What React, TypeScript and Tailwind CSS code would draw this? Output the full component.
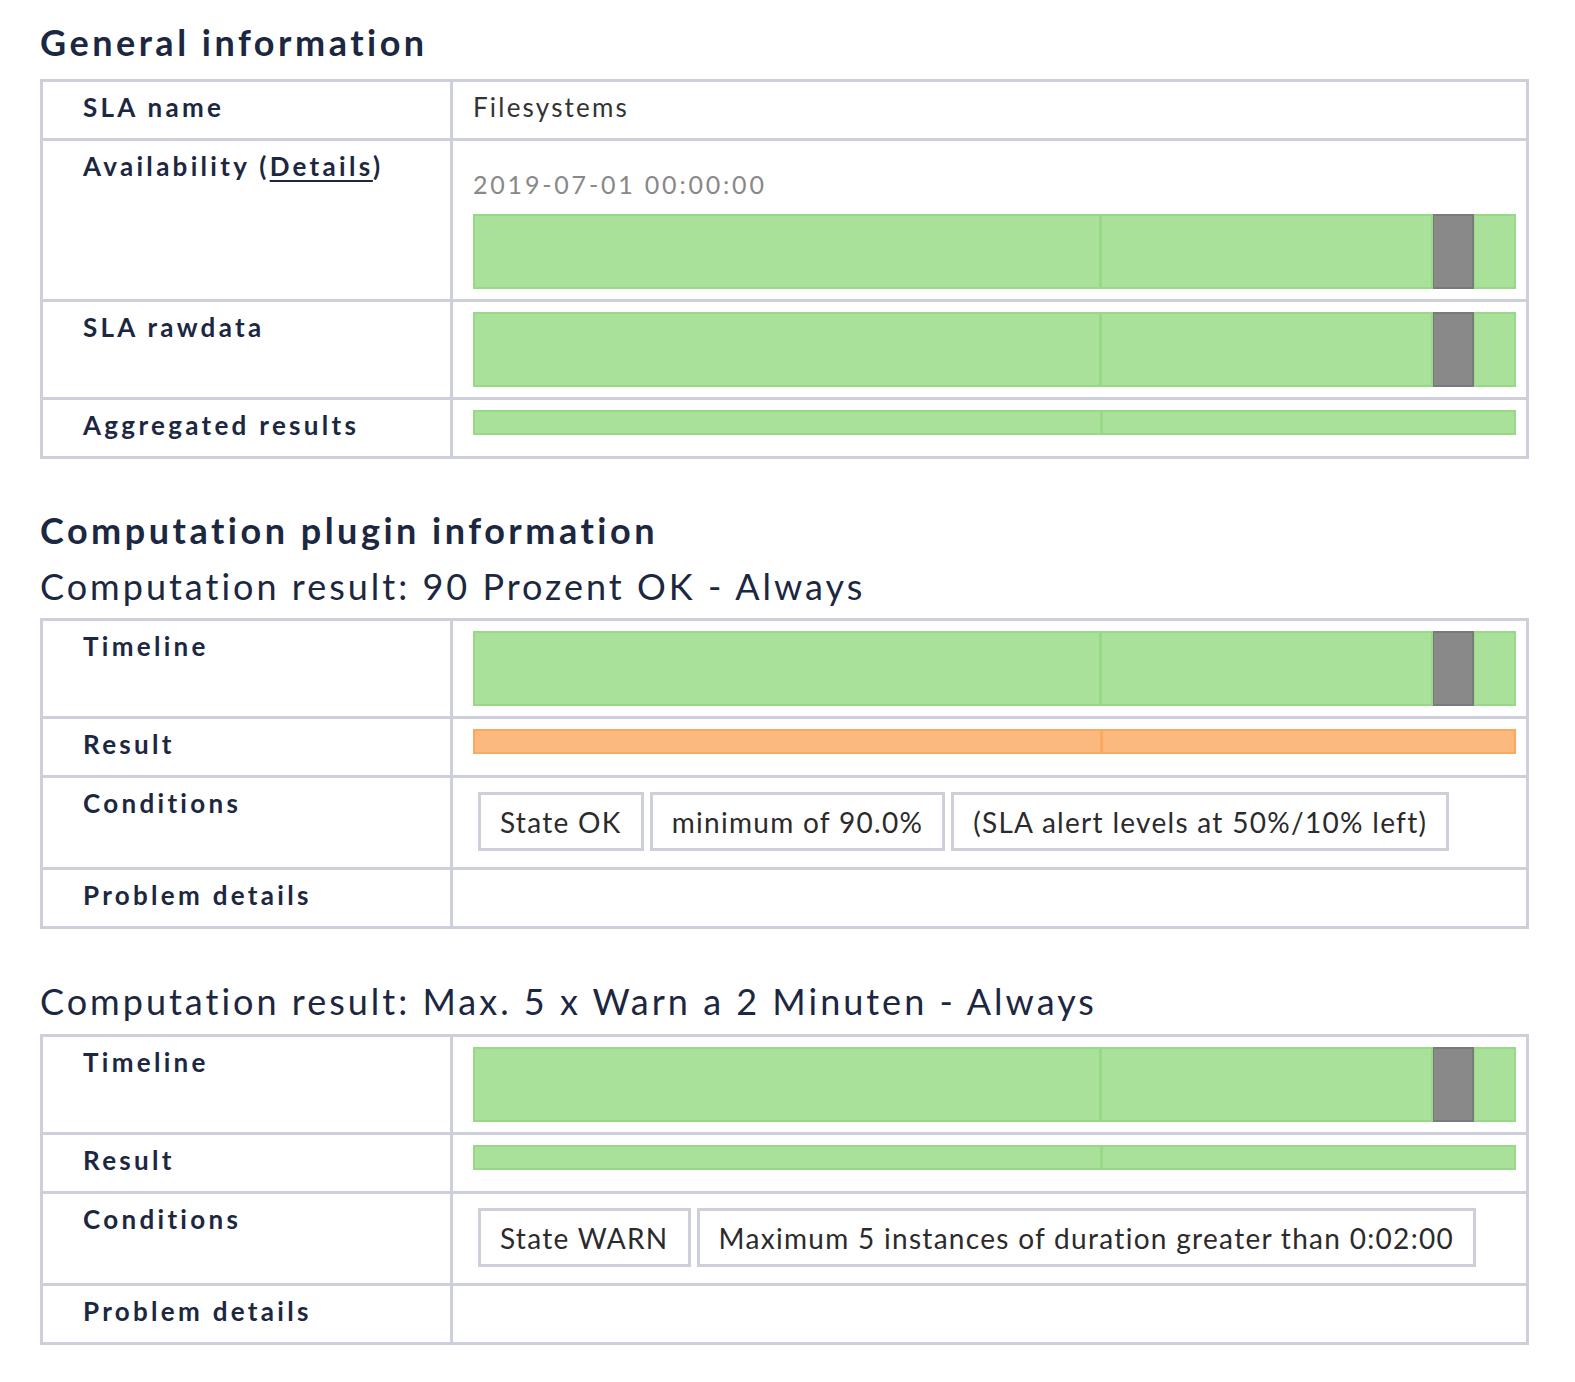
import React from "react";

type Seg = { w: number; kind: "ok" | "gray" | "warn" };

const timeline: Seg[] = [
  { w: 60.2, kind: "ok" },
  { w: 31.8, kind: "ok" },
  { w: 4.0, kind: "gray" },
  { w: 4.0, kind: "ok" },
];

const twoGreen: Seg[] = [
  { w: 60.3, kind: "ok" },
  { w: 39.7, kind: "ok" },
];

const twoOrange: Seg[] = [
  { w: 60.3, kind: "warn" },
  { w: 39.7, kind: "warn" },
];

const segClass = {
  ok: "bg-[#a9e09a] border-[#98d987]",
  gray: "bg-[#898989] border-[#7a7a7a]",
  warn: "bg-[#fbb97d] border-[#f8aa60]",
};

const Bar = ({ segs, tall }: { segs: Seg[]; tall?: boolean }) => (
  <div className={`flex w-full ${tall ? "h-[75px]" : "h-[25px]"}`}>
    {segs.map((s, i) => (
      <div
        key={i}
        className={`h-full border-2 ${i > 0 ? "border-l" : ""} ${segClass[s.kind]}`}
        style={{ width: `${s.w}%` }}
      />
    ))}
  </div>
);

const Tag = ({ children }: { children: React.ReactNode }) => (
  <div className="h-[59px] border-[3px] border-[#cdcfdb] px-[19px] flex items-center text-[28px] tracking-[1.3px] text-[#2b2b2b] whitespace-nowrap">
    {children}
  </div>
);

const Row = ({
  label,
  first,
  children,
  valueClass = "pt-[10px] pb-[10px]",
}: {
  label: React.ReactNode;
  first?: boolean;
  children?: React.ReactNode;
  valueClass?: string;
}) => (
  <div className={`flex ${first ? "" : "border-t-[3px] border-[#cdcfdb]"}`}>
    <div className="w-[410px] shrink-0 border-r-[3px] border-[#cdcfdb] pl-[40px] pt-[10px] pb-[15px] text-[26px] leading-[31px] font-bold tracking-[3.3px] text-[#1c2741]">
      {label}
    </div>
    <div className={`flex-1 pl-[20px] pr-[10px] ${valueClass}`}>{children}</div>
  </div>
);

const Table = ({ children }: { children: React.ReactNode }) => (
  <div className="w-[1489px] border-[3px] border-[#cdcfdb]">{children}</div>
);

const ResultTable = ({ result, tags }: { result: Seg[]; tags: string[] }) => (
  <Table>
    <Row label="Timeline" first>
      <Bar segs={timeline} tall />
    </Row>
    <Row label="Result">
      <Bar segs={result} />
    </Row>
    <Row label="Conditions" valueClass="pt-[14px] pb-[16px] pl-[25px]">
      <div className="flex gap-[6px]">
        {tags.map((t) => (
          <Tag key={t}>{t}</Tag>
        ))}
      </div>
    </Row>
    <Row label="Problem details" />
  </Table>
);

export default function App() {
  return (
    <div
      className="bg-white min-h-screen pl-[40px] pt-[21px] pb-[40px] text-[#1c2741]"
      style={{ fontFamily: "Lato, 'Open Sans', sans-serif" }}
    >
      <h2 className="text-[36px] leading-[43px] font-bold tracking-[3.5px]">General information</h2>
      <div className="mt-[15px]">
        <Table>
          <Row label="SLA name" first valueClass="pt-[10px]">
            <div className="text-[26px] leading-[31px] tracking-[2.2px] text-[#333]">Filesystems</div>
          </Row>
          <Row
            label={
              <>
                Availability (<span className="underline underline-offset-[4px]">Details</span>)
              </>
            }
          >
            <div className="mt-[18px] text-[25px] leading-[31px] tracking-[2.8px] text-[#888]">
              2019-07-01 00:00:00
            </div>
            <div className="mt-[14px]">
              <Bar segs={timeline} tall />
            </div>
          </Row>
          <Row label="SLA rawdata">
            <Bar segs={timeline} tall />
          </Row>
          <Row label="Aggregated results">
            <Bar segs={twoGreen} />
          </Row>
        </Table>
      </div>

      <h2 className="mt-[50px] text-[36px] leading-[43px] font-bold tracking-[3.5px]">
        Computation plugin information
      </h2>
      <h3 className="mt-[13px] text-[36px] leading-[43px] font-normal tracking-[3px]">
        Computation result: 90 Prozent OK - Always
      </h3>
      <div className="mt-[10px]">
        <ResultTable
          result={twoOrange}
          tags={["State OK", "minimum of 90.0%", "(SLA alert levels at 50%/10% left)"]}
        />
      </div>

      <h3 className="mt-[51px] text-[36px] leading-[43px] font-normal tracking-[3px]">
        Computation result: Max. 5 x Warn a 2 Minuten - Always
      </h3>
      <div className="mt-[11px]">
        <ResultTable
          result={twoGreen}
          tags={["State WARN", "Maximum 5 instances of duration greater than 0:02:00"]}
        />
      </div>
    </div>
  );
}
